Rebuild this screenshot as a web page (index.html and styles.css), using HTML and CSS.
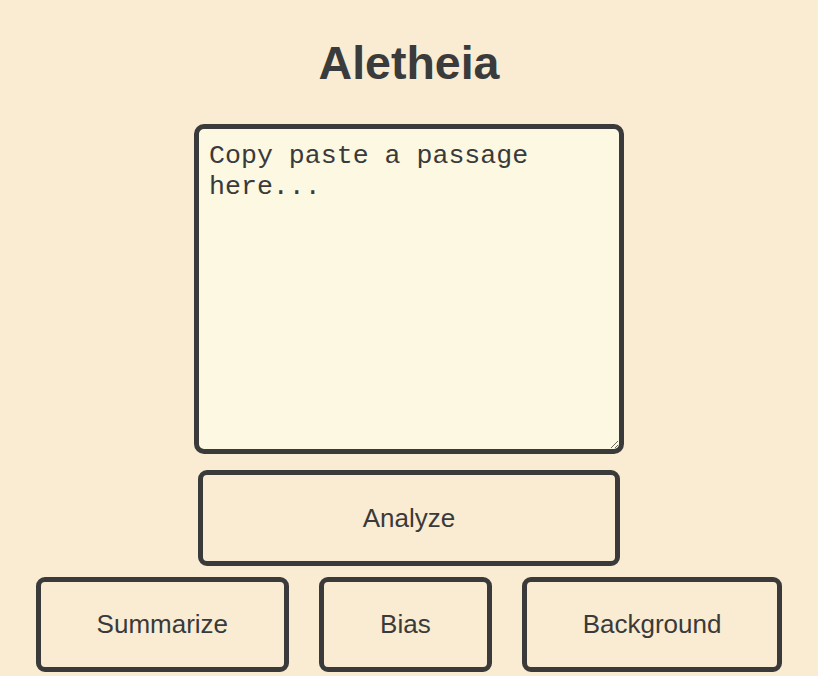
FILE: index.html
```html
<!DOCTYPE html>
<html lang="en">
<head>
<meta charset="utf-8">
<title>Aletheia</title>
<link rel="stylesheet" href="styles.css">
</head>
<body>
<main class="app">
  <h1 class="title">Aletheia</h1>
  <textarea class="passage" placeholder="Copy paste a passage here..."></textarea>
  <button class="btn btn-analyze">Analyze</button>
  <div class="actions">
    <button class="btn">Summarize</button>
    <button class="btn">Bias</button>
    <button class="btn">Background</button>
  </div>
</main>
</body>
</html>
```

FILE: styles.css
```css
html, body {
  margin: 0;
  padding: 0;
  background: #f9ecd2;
  height: 100%;
  overflow: hidden;
}

.app {
  display: flex;
  flex-direction: column;
  align-items: center;
  padding-top: 38px;
  font-family: "Liberation Sans", Arial, sans-serif;
  color: #3a3a3a;
}

.title {
  margin: 0;
  font-size: 46.5px;
  font-weight: 700;
  line-height: 51px;
  color: #3a3b3c;
}

.passage {
  box-sizing: border-box;
  margin-top: 35px;
  width: 430px;
  height: 330px;
  padding: 12px 10px;
  border: 5px solid #3a3a3a;
  border-radius: 10px;
  background: #fdf8e2;
  font-family: "Liberation Mono", "Courier New", monospace;
  font-size: 26.6px;
  line-height: 31px;
  color: #3a3a3a;
  outline: none;
}

.passage::placeholder {
  color: #3a3a3a;
  opacity: 1;
}

.btn {
  box-sizing: border-box;
  height: 95px;
  padding: 0 56px;
  border: 5px solid #3a3a3a;
  border-radius: 9px;
  background: #f9ecd2;
  font-family: "Liberation Sans", Arial, sans-serif;
  font-size: 26px;
  color: #3a3a3a;
  cursor: pointer;
}

.btn-analyze {
  margin-top: 16px;
  width: 422px;
  height: 96px;
}

.actions {
  display: flex;
  gap: 30px;
  margin-top: 11px;
}
```
